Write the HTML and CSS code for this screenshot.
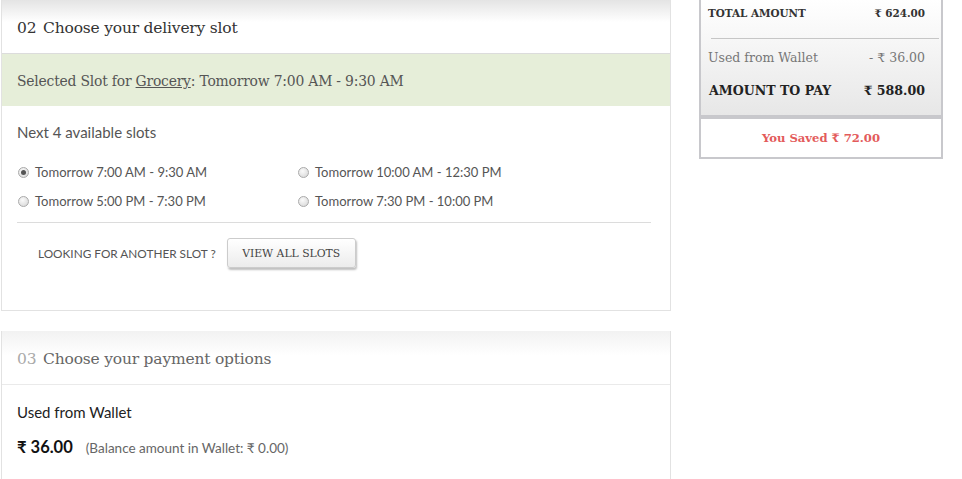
FILE: index.html
```html
<!DOCTYPE html>
<html lang="en">
<head>
    <meta charset="UTF-8">
    <title>Checkout</title>
    <link rel="stylesheet" href="styles.css">
</head>
<body>
<div class="page">
    <div class="main">
        <div class="step">
            <div class="step-head"><span class="num">02</span> Choose your delivery slot</div>
            <div class="selected">Selected Slot for <u>Grocery</u>: Tomorrow 7:00 AM - 9:30 AM</div>
            <div class="slots">
                <p class="slots-title">Next 4 available slots</p>
                <div class="slot-grid">
                    <label class="slot"><span class="radio checked"></span>Tomorrow 7:00 AM - 9:30 AM</label>
                    <label class="slot"><span class="radio"></span>Tomorrow 10:00 AM - 12:30 PM</label>
                    <label class="slot"><span class="radio"></span>Tomorrow 5:00 PM - 7:30 PM</label>
                    <label class="slot"><span class="radio"></span>Tomorrow 7:30 PM - 10:00 PM</label>
                </div>
                <div class="another">
                    <span>LOOKING FOR ANOTHER SLOT ?</span>
                    <button class="btn">VIEW ALL SLOTS</button>
                </div>
            </div>
        </div>

        <div class="step step-pay">
            <div class="step-head faded"><span class="num">03</span> Choose your payment options</div>
            <div class="wallet">
                <p class="wallet-title">Used from Wallet</p>
                <p class="wallet-amt"><b>₹ 36.00</b> <span>(Balance amount in Wallet: ₹ 0.00)</span></p>
            </div>
        </div>
    </div>

    <div class="side">
        <div class="totals">
            <div class="row strong-sm"><span>TOTAL AMOUNT</span><span>₹ 624.00</span></div>
            <hr>
            <div class="row light"><span>Used from Wallet</span><span>- ₹ 36.00</span></div>
            <div class="row big"><span>AMOUNT TO PAY</span><span>₹ 588.00</span></div>
        </div>
        <div class="saved">You Saved ₹ 72.00</div>
    </div>
</div>
</body>
</html>
```

FILE: styles.css
```css
body {
    margin: 0;
    background: #fff;
    font-family: Lato, "Open Sans", sans-serif;
    color: #444;
}
.page {
    display: flex;
    align-items: flex-start;
    padding-left: 1px;
}
.main {
    width: 670px;
}
.step {
    border: 1px solid #e2e2e2;
    border-top: none;
    height: 311px;
    box-sizing: border-box;
}
.step-head {
    height: 54px;
    box-sizing: border-box;
    padding: 19px 15px 0;
    font-family: "DejaVu Serif", serif;
    font-size: 15.5px;
    color: #333;
    background: linear-gradient(#e4e4e4 0, #fff 22px, #fff);
    border-bottom: 1px solid #dcdcdc;
    letter-spacing: -0.2px;
}
.step-head .num {
    margin-right: 2px;
}
.selected {
    background: #e6eed9;
    height: 52px;
    box-sizing: border-box;
    padding: 19px 15px 0;
    font-family: "DejaVu Serif", serif;
    font-size: 13.9px;
    color: #555;
    letter-spacing: -0.2px;
}
.slots {
    padding: 0 19px 0 15px;
}
.slots-title {
    margin: 17px 0 0;
    font-size: 15px;
    color: #555;
}
.slot-grid {
    display: grid;
    grid-template-columns: 280px 1fr;
    row-gap: 11px;
    margin-top: 22px;
    padding-bottom: 12px;
    border-bottom: 1px solid #dcdcdc;
}
.slot {
    display: flex;
    align-items: center;
    font-size: 13px;
    color: #555;
    height: 18px;
}
.radio {
    width: 11px;
    height: 11px;
    border-radius: 50%;
    border: 1px solid #aaa;
    background: radial-gradient(circle at 40% 35%, #fafafa, #d4d4d4);
    margin: 0 6px 0 1px;
    box-sizing: border-box;
    position: relative;
}
.radio.checked::after {
    content: "";
    position: absolute;
    left: 2px;
    top: 2px;
    width: 5px;
    height: 5px;
    border-radius: 50%;
    background: #555;
}
.another {
    display: flex;
    align-items: center;
    padding: 15px 0 0 21px;
    font-size: 11.8px;
    color: #555;
}
.btn {
    margin-left: 11px;
    width: 129px;
    height: 30px;
    border: 1px solid #ccc;
    border-radius: 3px;
    background: linear-gradient(#fff, #ececec);
    box-shadow: 1px 2px 2px rgba(0, 0, 0, 0.25);
    font-family: "DejaVu Serif", serif;
    font-size: 10.8px;
    color: #444;
}
.step-pay {
    margin-top: 20px;
    height: 149px;
    border-top: none;
    border-bottom: 1px solid #e6eed9;
}
.step-pay .step-head {
    background: linear-gradient(#f2f2f2 0, #fff 25px, #fff);
    border-bottom-color: #eaeaea;
}
.faded {
    color: #666;
}
.faded .num {
    color: #aaa;
}
.wallet {
    padding: 0 15px;
}
.wallet-title {
    margin: 18px 0 0;
    font-size: 15px;
    color: #222;
}
.wallet-amt {
    margin: 16px 0 0;
    display: flex;
    align-items: baseline;
}
.wallet-amt b {
    font-size: 16.5px;
    color: #111;
    margin-right: 13px;
}
.wallet-amt span {
    font-size: 13.5px;
    color: #666;
}
.side {
    margin-left: 28px;
    width: 244px;
    border: 2px solid #c8c8cc;
    border-top: none;
    box-sizing: border-box;
    background: #c8c8cc;
}
.totals {
    background: linear-gradient(#fff, #e7e7e7);
    padding: 5px 16px 0 7px;
    height: 115px;
    box-sizing: border-box;
    font-family: "DejaVu Serif", serif;
}
.row {
    display: flex;
    justify-content: space-between;
    align-items: center;
}
.strong-sm {
    font-size: 10.4px;
    font-weight: bold;
    color: #333;
    height: 16px;
}
.totals hr {
    border: none;
    border-top: 1px solid #c6c6c6;
    margin: 17px -14px 10px 3px;
}
.light {
    font-size: 12.5px;
    color: #777;
    height: 16px;
}
.big {
    font-size: 12.6px;
    font-weight: bold;
    color: #222;
    margin-top: 18px;
    padding-left: 1px;
}
.saved {
    margin-top: 4px;
    background: #fff;
    height: 38px;
    display: flex;
    align-items: center;
    justify-content: center;
    font-family: "DejaVu Serif", serif;
    font-size: 11.6px;
    font-weight: bold;
    color: #e35b5b;
}
```
